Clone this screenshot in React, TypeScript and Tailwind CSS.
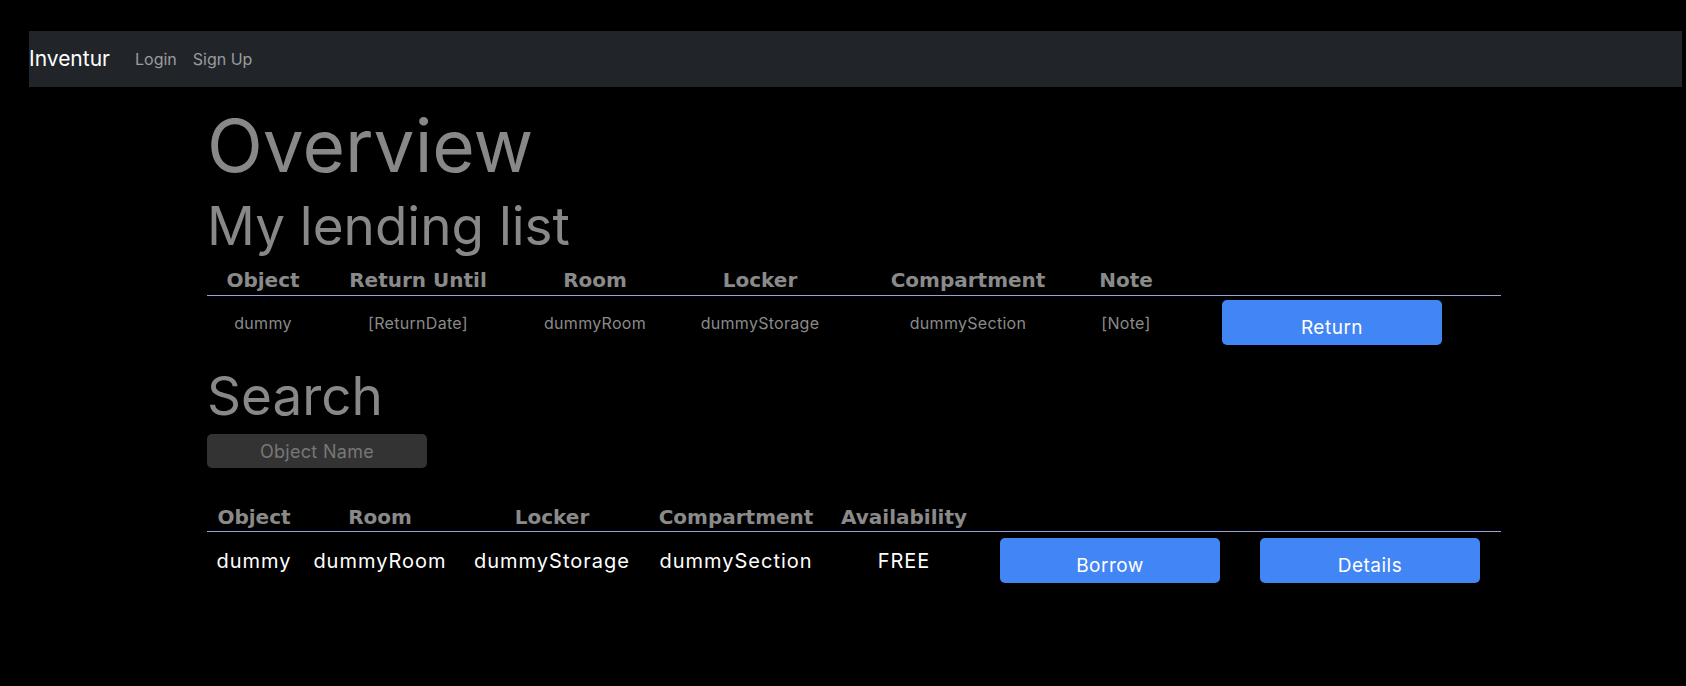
import React from 'react';

const lendCols = 'grid grid-cols-[112px_198px_156px_174px_242px_74px_338px]';
const searchCols = 'grid grid-cols-[94px_158px_186px_182px_154px_258px_262px]';

function Btn({ label }: { label: string }) {
    return (
        <button className="mx-auto flex h-[45px] w-[220px] items-start justify-center rounded-[5px] bg-[#4285f4] pt-[16px] text-[19px] leading-[24px] tracking-[0.5px] text-white">
            {label}
        </button>
    );
}

export default function App() {
    const lendHeaders = ['Object', 'Return Until', 'Room', 'Locker', 'Compartment', 'Note', ''];
    const lendRow = ['dummy', '[ReturnDate]', 'dummyRoom', 'dummyStorage', 'dummySection', '[Note]'];
    const searchHeaders = ['Object', 'Room', 'Locker', 'Compartment', 'Availability', '', ''];
    const searchRow = ['dummy', 'dummyRoom', 'dummyStorage', 'dummySection', 'FREE'];

    return (
        <div className="min-h-[686px] bg-black font-['Inter',sans-serif] pb-10">
            <div className="ml-[29px] mr-[4px] pt-[31px]">
                {/* Navbar */}
                <nav className="flex h-[56px] items-center bg-[#212529]">
                    <span className="mr-[17px] text-[21px] text-white">Inventur</span>
                    <a className="px-2 text-[16px] text-[#9a9c9f]">Login</a>
                    <a className="px-2 text-[16px] text-[#9a9c9f]">Sign Up</a>
                </nav>

                <main className="ml-[178px] w-[1294px] pt-[16px] text-[#888]">
                    <h1 className="text-[73px] leading-[86px]">Overview</h1>
                    <h2 className="mt-[5px] text-[53px] leading-[64px]">My lending list</h2>

                    {/* Lending table */}
                    <div className="mt-[8px]">
                        <div className={`${lendCols} border-b border-[#9aa3d9] pb-[1px]`}>
                            {lendHeaders.map((h, i) => (
                                <div key={i} className="text-center font-['DejaVu_Sans',sans-serif] text-[20px] font-bold leading-[28px] text-[#8a8a8a]">
                                    {h}
                                </div>
                            ))}
                        </div>
                        <div className={`${lendCols} items-center pt-[4px] pb-[4px]`}>
                            {lendRow.map((c, i) => (
                                <div key={i} className="text-center text-[16px] tracking-[0.3px] text-[#8a8a8a]">
                                    {c}
                                </div>
                            ))}
                            <div>
                                <Btn label="Return" />
                            </div>
                        </div>
                    </div>

                    <h2 className="mt-[15px] text-[53px] leading-[64px]">Search</h2>
                    <input
                        placeholder="Object Name"
                        className="mt-[6px] h-[34px] w-[220px] rounded-[5px] bg-[#333] text-center text-[18px] tracking-[0.3px] text-[#777] placeholder:text-[#777] outline-none"
                    />

                    {/* Search results */}
                    <div className="mt-[36px]">
                        <div className={`${searchCols} border-b border-[#9aa3d9]`}>
                            {searchHeaders.map((h, i) => (
                                <div key={i} className="text-center font-['DejaVu_Sans',sans-serif] text-[20px] font-bold leading-[27px] text-[#8a8a8a]">
                                    {h}
                                </div>
                            ))}
                        </div>
                        <div className={`${searchCols} items-center pt-[6px]`}>
                            {searchRow.map((c, i) => (
                                <div key={i} className="text-center text-[20px] tracking-[1px] text-white">
                                    {c}
                                </div>
                            ))}
                            <div>
                                <Btn label="Borrow" />
                            </div>
                            <div>
                                <Btn label="Details" />
                            </div>
                        </div>
                    </div>
                </main>
            </div>
        </div>
    );
}
